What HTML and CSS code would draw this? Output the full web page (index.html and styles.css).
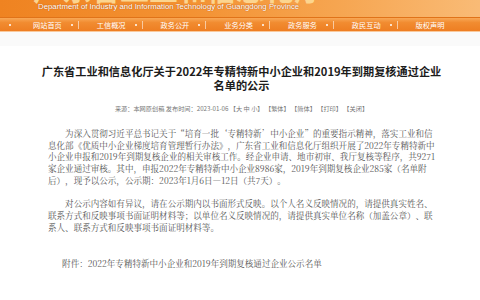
FILE: index.html
```html
<!DOCTYPE html>
<html lang="zh-CN">
<head>
<meta charset="utf-8">
<title>广东省工业和信息化厅</title>
<link rel="stylesheet" href="styles.css">
</head>
<body>
<header class="masthead">
  <div class="cn-logo">广东省工业和信息化厅</div>
  <div class="en-logo">Department of Industry and Information Technology of Guangdong Province</div>
</header>
<nav class="nav">
  <span class="dot lead"></span>
  <a class="nav-item">网站首页</a><span class="sep"><span class="dot"></span><span class="bar"></span></span>
  <a class="nav-item">工信概况</a><span class="sep"><span class="dot"></span><span class="bar"></span></span>
  <a class="nav-item">政务公开</a><span class="sep"><span class="dot"></span><span class="bar"></span></span>
  <a class="nav-item">业务分类</a><span class="sep"><span class="dot"></span><span class="bar"></span></span>
  <a class="nav-item">政务服务</a><span class="sep"><span class="dot"></span><span class="bar"></span></span>
  <a class="nav-item">政民互动</a><span class="sep"><span class="dot"></span><span class="bar"></span></span>
  <a class="nav-item">版权声明</a>
</nav>
<div class="crumb"></div>
<article class="article">
  <h1 class="title">广东省工业和信息化厅关于2022年专精特新中小企业和2019年到期复核通过企业<br>名单的公示</h1>
  <div class="meta">来源：本网原创稿 发布时间：2023-01-06 【大 中 小】 【繁体】 【简体】 【打印】 【关闭】</div>
  <div class="content">
    <p>为深入贯彻习近平总书记关于“培育一批‘专精特新’中小企业”的重要指示精神，落实工业和信息化部《优质中小企业梯度培育管理暂行办法》，广东省工业和信息化厅组织开展了2022年专精特新中小企业申报和2019年到期复核企业的相关审核工作。经企业申请、地市初审、我厅复核等程序，共9271家企业通过审核。其中，申报2022年专精特新中小企业8986家，2019年到期复核企业285家（名单附后），现予以公示，公示期：2023年1月6日—12日（共7天）。</p>
    <p>对公示内容如有异议，请在公示期内以书面形式反映。以个人名义反映情况的，请提供真实姓名、联系方式和反映事项书面证明材料等；以单位名义反映情况的，请提供真实单位名称（加盖公章）、联系人、联系方式和反映事项书面证明材料等。</p>
    <p class="attach">附件：2022年专精特新中小企业和2019年到期复核通过企业公示名单</p>
  </div>
</article>
</body>
</html>
```
FILE: styles.css
```css
* {
  margin: 0;
  padding: 0;
  box-sizing: border-box;
}

body {
  width: 480px;
  height: 300px;
  overflow: hidden;
  background: #fff;
  font-family: "Noto Sans CJK SC", sans-serif;
}

.masthead {
  height: 18px;
  overflow: hidden;
  background: linear-gradient(90deg, #ef8321 0%, #f39233 40%, #f6a550 70%, #f9bb76 100%);
  border-bottom: 1px solid #e07319;
}

.cn-logo {
  font-size: 29px;
  line-height: 29px;
  margin-top: -26px;
  padding-left: 33px;
  color: #fcd58f;
  font-weight: 700;
  white-space: nowrap;
}

.en-logo {
  font-family: "Liberation Sans", Arial, sans-serif;
  font-size: 7.8px;
  line-height: 8px;
  padding-left: 38px;
  color: #fff;
  white-space: nowrap;
  text-shadow: 0 0 1px #c45f12, 0 0 1px #c45f12;
}

.nav {
  height: 14px;
  display: flex;
  align-items: center;
  padding-left: 9px;
  background: linear-gradient(180deg, #f8a856 0%, #f18c31 35%, #ee7e22 100%);
  border-bottom: 1px solid #f9c99c;
  color: #fff;
  font-size: 7.2px;
  white-space: nowrap;
}

.nav-item {
  color: #fff;
  text-decoration: none;
  line-height: 14px;
}

.dot {
  width: 2px;
  height: 2px;
  border-radius: 50%;
  background: #fff;
  display: block;
}

.dot.lead {
  margin-right: 22px;
}

.sep {
  display: flex;
  align-items: center;
  gap: 5px;
  margin: 0 18px 0 9px;
}

.bar {
  width: 1px;
  height: 8px;
  background: rgba(255, 255, 255, 0.55);
  display: block;
}

.crumb {
  height: 14px;
  background: #fafafa;
}

.article {
  padding: 0 42px 0 48px;
}

.title {
  margin: 17.6px -7px 0 -10px;
  font-size: 11.2px;
  line-height: 14.7px;
  font-weight: 700;
  text-align: center;
  color: #1c1c1c;
}

.meta {
  margin: 11px -17px 0 -20px;
  font-size: 6.2px;
  line-height: 9px;
  text-align: center;
  color: #777;
  white-space: nowrap;
}

.content {
  font-family: "Noto Serif CJK SC", "Liberation Serif", "Noto Sans CJK SC", serif;
  font-size: 8.55px;
  line-height: 11.7px;
  color: #555;
  text-spacing-trim: space-all;
}

.content p {
  text-indent: 2em;
  margin-top: 11.7px;
}

.content p:first-child {
  margin-top: 15px;
}

.content p.attach {
  margin-top: 24.7px;
  text-indent: 1.65em;
}
```
